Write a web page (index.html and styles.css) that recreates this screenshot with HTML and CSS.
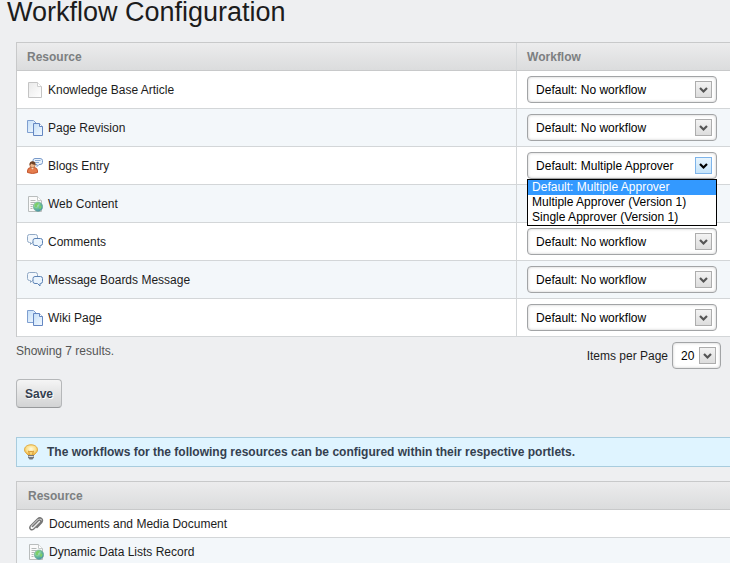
FILE: index.html
```html
<!DOCTYPE html>
<html lang="en">
<head>
<meta charset="utf-8">
<title>Workflow Configuration</title>
<link rel="stylesheet" href="styles.css">
</head>
<body>
<svg class="sprites" aria-hidden="true">
  <defs>
    <linearGradient id="g-page" x1="0" y1="0" x2="1" y2="1"><stop offset="0" stop-color="#e9e9e9"/><stop offset="1" stop-color="#fff"/></linearGradient>
    <linearGradient id="g-blue" x1="0" y1="0" x2="1" y2="1"><stop offset="0" stop-color="#c5dff8"/><stop offset="1" stop-color="#f3f9ff"/></linearGradient>
    <radialGradient id="g-globe" cx=".35" cy=".3" r=".8"><stop offset="0" stop-color="#c6edcf"/><stop offset=".5" stop-color="#6cc093"/><stop offset="1" stop-color="#3c84b8"/></radialGradient>
    <radialGradient id="g-bulb" cx=".5" cy=".4" r=".6"><stop offset="0" stop-color="#fffbe0"/><stop offset=".6" stop-color="#fbdf8a"/><stop offset="1" stop-color="#eeb23c"/></radialGradient>
    <linearGradient id="g-arrow" x1="0" y1="0" x2="0" y2="1"><stop offset="0" stop-color="#f4f4f4"/><stop offset="1" stop-color="#dcdcdc"/></linearGradient>
    <linearGradient id="g-arrow-on" x1="0" y1="0" x2="0" y2="1"><stop offset="0" stop-color="#eaf5fd"/><stop offset="1" stop-color="#c3e3fa"/></linearGradient>
  </defs>
  <symbol id="page" viewBox="0 0 16 16">
    <path d="M1.500.5h9l4 4v11h-13z" fill="url(#g-page)" stroke="#c4c4c4"/>
    <path d="M10.500.5v4h4" fill="#fff" stroke="#cfcfcf"/>
  </symbol>
  <symbol id="pages" viewBox="0 0 16 16">
    <path d="M.5.5h6l3 3v9h-9z" fill="url(#g-blue)" stroke="#7f9fd0"/>
    <path d="M6.500 3.500h6l3 3v9h-9z" fill="url(#g-blue)" stroke="#6487c2"/>
    <path d="M12.500 3.500v3h3" fill="#fff" stroke="#6487c2"/>
  </symbol>
  <symbol id="blog" viewBox="0 0 16 16">
    <path d="M8 .5h5q2.500 0 2.500 2v2q0 2-2.500 2h-1l-2 2v-2H8q-2-.2-2-2v-2q0-2 2-2z" fill="#eaf3fc" stroke="#7899c9"/>
    <path d="M8 2.500h5.500M8 4.500h4" stroke="#8cabd4"/>
    <path d="M.5 13q0-3.500 3.500-3.500h3q3.500 0 3.500 3.500v1.500q-5 2-10 0z" fill="#e57c4d" stroke="#c2552e"/>
    <path d="M4 9.500l1.500 2 1.500-2z" fill="#fff0df"/>
    <circle cx="5.500" cy="7" r="2.700" fill="#eeb58b" stroke="#9c6038" stroke-width=".7"/>
    <path d="M2.600 7q-.4-3.700 3-3.700 3.200.2 2.800 3.500-2.800.2-3.800-1.300Q4 6.700 2.600 7z" fill="#6f4126"/>
  </symbol>
  <symbol id="webpage" viewBox="0 0 16 16">
    <path d="M1.500.5h9l4 4v11h-13z" fill="#fafafa" stroke="#b9bdbd"/>
    <path d="M10.500.5v4h4" fill="#fff" stroke="#c5c9c9"/>
    <path d="M3.500 4.500h5M3.500 6.500h5M3.500 8.500h3M3.500 10.500h2M3.500 12.500h2" stroke="#b4b8b8"/>
    <circle cx="11" cy="10.700" r="4.700" fill="url(#g-globe)" stroke="#69a694" stroke-width=".6"/>
    <path d="M7.500 8.500q1.500-2 3.500-2l1 1.500-1.500 1-.5 2-2 .3zM12.500 9.500l2 .5q.3 2-1.500 3.500l-1-2z" fill="#7ccf68"/>
  </symbol>
  <symbol id="chat" viewBox="0 0 16 16">
    <path d="M2.500.5h6q2 0 2 2v4q0 2-2 2h-3l-2 2v-2h-1q-2 0-2-2v-4q0-2 2-2z" fill="#f2f7fc" stroke="#91a9c5"/>
    <path d="M8 4.500h5.500q2 0 2 2v3q0 2-2 2h-.5v2.500l-2.500-2.500H8q-2 0-2-2v-3q0-2 2-2z" fill="#eaf4fd" stroke="#5c82b4"/>
  </symbol>
  <symbol id="clip" viewBox="0 0 16 16">
    <g fill="none" stroke-linecap="round">
      <path d="M4.500 10.500l6-6q1.300-1 2 0t-.3 2l-6.500 6.500q-1.800 1.500-3.200.2t0-3.200L9.500 3q2.200-2 4-.5t.2 4L9 11.500" stroke="#777" stroke-width="1.500"/>
      <path d="M3 10.200l6.700-6.700M6 11.500l5.500-5.500" stroke="#d5d5d5" stroke-width=".7"/>
    </g>
  </symbol>
  <symbol id="bulb" viewBox="0 0 16 16">
    <path d="M8 .8c3.800 0 6.500 2 6.500 5 0 2.700-2.500 3.700-3.500 5.200H5C4 9.500 1.500 8.500 1.500 5.800c0-3 2.700-5 6.500-5z" fill="url(#g-bulb)" stroke="#dfaa43"/>
    <path d="M6.500 10.500l-1-3.500 1.500 1 1-1 1 1 1.500-1-1 3.500" fill="#f9d575" stroke="#cf8d27" stroke-width=".8"/>
    <path d="M5 11h6v2.500l-1.500 2h-3l-1.500-2z" fill="#75797c"/>
    <path d="M5.500 12.500h5" stroke="#ddd"/>
  </symbol>
  <symbol id="arrow" viewBox="0 0 17 17">
    <rect x=".5" y=".5" width="16" height="16" fill="url(#g-arrow)" stroke="#adadad"/>
    <path d="M5 7l3.500 3.500L12 7" fill="none" stroke="#555" stroke-width="2.200"/>
  </symbol>
  <symbol id="arrow-on" viewBox="0 0 17 17">
    <rect x=".5" y=".5" width="16" height="16" fill="url(#g-arrow-on)" stroke="#7eb4ea"/>
    <path d="M5 7l3.500 3.500L12 7" fill="none" stroke="#000" stroke-width="2.200"/>
  </symbol>
</svg>

<h1>Workflow Configuration</h1>

<main>
  <form>
    <table class="grid">
      <thead>
        <tr><th class="col-resource" scope="col">Resource</th><th scope="col">Workflow</th></tr>
      </thead>
      <tbody>
        <tr>
          <td><label class="name" for="w1"><svg class="icon"><use href="#page"/></svg>Knowledge Base Article</label></td>
          <td><div class="picker"><select id="w1"><option>Default: No workflow</option></select><svg class="arrow"><use href="#arrow"/></svg></div></td>
        </tr>
        <tr>
          <td><label class="name" for="w2"><svg class="icon"><use href="#pages"/></svg>Page Revision</label></td>
          <td><div class="picker"><select id="w2"><option>Default: No workflow</option></select><svg class="arrow"><use href="#arrow"/></svg></div></td>
        </tr>
        <tr>
          <td><label class="name" for="w3"><svg class="icon"><use href="#blog"/></svg>Blogs Entry</label></td>
          <td>
            <div class="picker"><select id="w3"><option>Default: Multiple Approver</option><option>Multiple Approver (Version 1)</option><option>Single Approver (Version 1)</option></select><svg class="arrow"><use href="#arrow-on"/></svg>
              <ul class="options" role="listbox" aria-label="Workflow">
                <li role="option" aria-selected="true">Default: Multiple Approver</li>
                <li role="option" aria-selected="false">Multiple Approver (Version 1)</li>
                <li role="option" aria-selected="false">Single Approver (Version 1)</li>
              </ul>
            </div>
          </td>
        </tr>
        <tr>
          <td><span class="name"><svg class="icon"><use href="#webpage"/></svg>Web Content</span></td>
          <td></td>
        </tr>
        <tr>
          <td><label class="name" for="w5"><svg class="icon"><use href="#chat"/></svg>Comments</label></td>
          <td><div class="picker"><select id="w5"><option>Default: No workflow</option></select><svg class="arrow"><use href="#arrow"/></svg></div></td>
        </tr>
        <tr>
          <td><label class="name" for="w6"><svg class="icon"><use href="#chat"/></svg>Message Boards Message</label></td>
          <td><div class="picker"><select id="w6"><option>Default: No workflow</option></select><svg class="arrow"><use href="#arrow"/></svg></div></td>
        </tr>
        <tr>
          <td><label class="name" for="w7"><svg class="icon"><use href="#pages"/></svg>Wiki Page</label></td>
          <td><div class="picker"><select id="w7"><option>Default: No workflow</option></select><svg class="arrow"><use href="#arrow"/></svg></div></td>
        </tr>
      </tbody>
    </table>

    <div class="summary">
      <p>Showing 7 results.</p>
      <div class="paging">
        <label for="per-page">Items per Page</label>
        <div class="picker small"><select id="per-page"><option>20</option></select><svg class="arrow"><use href="#arrow"/></svg></div>
      </div>
    </div>

    <button class="save" type="submit">Save</button>
  </form>

  <p class="notice"><svg class="icon"><use href="#bulb"/></svg>The workflows for the following resources can be configured within their respective portlets.</p>

  <table class="grid compact">
    <thead><tr><th scope="col">Resource</th></tr></thead>
    <tbody>
      <tr><td><span class="name"><svg class="icon"><use href="#clip"/></svg>Documents and Media Document</span></td></tr>
      <tr><td><span class="name"><svg class="icon"><use href="#webpage"/></svg>Dynamic Data Lists Record</span></td></tr>
    </tbody>
  </table>
</main>
</body>
</html>
```
FILE: styles.css
```css
* { box-sizing: border-box; }

body {
  margin: 0;
  background: #eeeff1;
  color: #1c1c1c;
  font: 12px/16px "Liberation Sans", Arial, sans-serif;
  overflow: hidden;
}

.sprites { position: absolute; width: 0; height: 0; }

h1 {
  margin: 0;
  padding: 0 7px 18px;
  font-size: 27px;
  line-height: 24px;
  font-weight: 400;
}

main { padding-left: 16px; }

.grid {
  width: 100%;
  border-collapse: separate;
  border-spacing: 0;
  border: solid #c8c9ca;
  border-width: 1px 0 0 1px;
}

.grid th {
  height: 28px;
  padding: 0 10px;
  border-bottom: 1px solid #c8c9ca;
  background: linear-gradient(#ececed, #dbdcdd);
  color: #7c7f81;
  text-align: left;
}

.grid td {
  height: 38px;
  padding: 0 10px;
  border-bottom: 1px solid #d3d6d8;
  background: #fff;
}

.grid tr > :nth-child(2) { border-left: 1px solid #d3d6d8; }
.grid tbody tr:nth-child(even) td { background: #f3f7fa; }
.col-resource { width: 70%; }
.compact th, .compact td { padding: 0 11px; }
.compact td { height: 28px; }

.name { display: flex; align-items: center; gap: 5px; }
.icon { width: 16px; height: 16px; flex: none; }

.picker {
  position: relative;
  display: grid;
  width: 190px;
  align-items: center;
}

.picker > select, .picker > .arrow { grid-area: 1 / 1; }

select {
  appearance: none;
  width: 100%;
  height: 27px;
  padding: 0 8px;
  border: 1px solid #a2a4a6;
  border-radius: 4px;
  background: #fff;
  box-shadow: inset 0 0 3px #c8c8c8;
  color: #000;
  font: inherit;
}

.arrow {
  width: 17px;
  height: 17px;
  margin-right: 5px;
  justify-self: end;
  pointer-events: none;
}

.picker.small { width: 49px; }

.options {
  position: absolute;
  z-index: 1;
  top: 100%;
  left: 0;
  right: 0;
  margin: 0;
  padding: 0;
  border: 1px solid #000;
  background: #fff;
  color: #000;
  line-height: 15px;
  list-style: none;
}

.options li { padding: 0 4px; }
.options [aria-selected="true"] { background: #3399ff; color: #fff; }

.summary {
  display: flex;
  justify-content: space-between;
  padding: 5px 9px 0 0;
  color: #555;
}

.summary p { margin: 1px 0; }
.paging { display: flex; align-items: center; gap: 4px; color: #1c1c1c; }

.save {
  display: block;
  height: 29px;
  margin-top: 10px;
  padding: 0 8px;
  border: 1px solid #b5b7b9;
  border-bottom-color: #97999b;
  border-radius: 4px;
  background: linear-gradient(#f5f5f5, #d2d3d4);
  color: #34404f;
  font: bold 12px/16px "Liberation Sans", Arial, sans-serif;
  text-shadow: 1px 1px #fff;
}

.notice {
  display: flex;
  align-items: center;
  gap: 8px;
  min-height: 30px;
  margin: 29px 0 14px;
  padding: 0 6px;
  border: solid #a8ccde;
  border-width: 1px 0 1px 1px;
  background: #dff4ff;
  color: #34404f;
  font-weight: 700;
}
```
